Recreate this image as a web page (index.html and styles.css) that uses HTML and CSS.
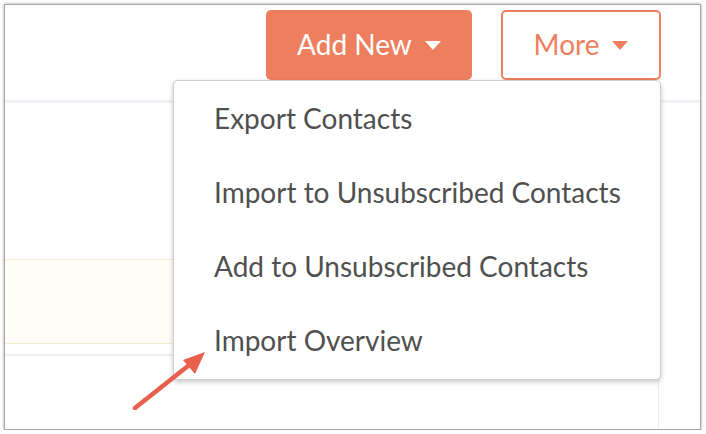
FILE: index.html
```html
<!DOCTYPE html>
<html>
<head>
<meta charset="utf-8">
<link rel="stylesheet" href="styles.css">
</head>
<body>
<div class="window">
  <div class="toolbar">
    <button class="btn btn-primary">Add New <span class="caret"></span></button>
    <button class="btn btn-outline">More <span class="caret"></span></button>
  </div>
  <div class="divider"></div>
  <div class="panel">
    <div class="notice"></div>
    <div class="row-line"></div>
  </div>
  <ul class="menu">
    <li>Export Contacts</li>
    <li>Import to Unsubscribed Contacts</li>
    <li>Add to Unsubscribed Contacts</li>
    <li>Import Overview</li>
  </ul>
  <svg class="pointer" width="90" height="80" viewBox="0 0 90 80">
    <line x1="6" y1="78" x2="64" y2="32" stroke="#e8604c" stroke-width="4.5" stroke-linecap="round"/>
    <polygon points="76,22 54,30 66,44" fill="#e8604c"/>
  </svg>
</div>
</body>
</html>
```

FILE: styles.css
```css
html, body {
  margin: 0;
  padding: 0;
  background: #ffffff;
}
body {
  font-family: Lato, "Open Sans", sans-serif;
}
.window {
  position: relative;
  margin: 4px 0 0 4px;
  width: 695px;
  height: 424px;
  border: 1px solid #a8a8a8;
  box-shadow: 0 0 3px rgba(0,0,0,0.35);
  background: #fff;
  overflow: hidden;
}
.toolbar {
  display: flex;
  justify-content: flex-end;
  align-items: flex-start;
  gap: 29px;
  height: 95px;
  box-sizing: border-box;
  padding: 5px 39px 0 0;
}
.btn {
  height: 70px;
  border-radius: 5px;
  font-family: Lato, "Open Sans", sans-serif;
  font-size: 28px;
  display: flex;
  align-items: center;
  justify-content: center;
  gap: 13px;
  padding: 0 0 2px;
  box-sizing: border-box;
  cursor: pointer;
}
.btn-primary {
  width: 206px;
  background: #ee7f5e;
  color: #fff;
  border: none;
}
.btn-outline {
  width: 160px;
  background: #fff;
  color: #ee7f5e;
  border: 2px solid #ee7f5e;
}
.caret {
  width: 0;
  height: 0;
  border-left: 8px solid transparent;
  border-right: 8px solid transparent;
  border-top: 9px solid currentColor;
  margin-top: 2px;
}
.divider {
  height: 3px;
  background: #eef2f6;
}
.panel {
  width: 654px;
  height: 326px;
  border-right: 1px solid #ececec;
  padding-top: 156px;
  box-sizing: border-box;
}
.notice {
  height: 85px;
  box-sizing: border-box;
  border-top: 1px solid #f4ebd2;
  border-bottom: 1px solid #f4ebd2;
  background: #fffdf6;
}
.row-line {
  margin-top: 10px;
  height: 2px;
  background: #efefef;
}
.menu {
  position: absolute;
  left: 168px;
  top: 75px;
  width: 488px;
  height: 300px;
  box-sizing: border-box;
  margin: 0;
  padding: 0;
  list-style: none;
  background: #fff;
  border: 1px solid #cfcfcf;
  border-radius: 5px;
  box-shadow: 0 2px 5px rgba(0,0,0,0.22);
}
.menu li {
  height: 74px;
  display: flex;
  align-items: center;
  padding-left: 40px;
  font-size: 28px;
  color: #505050;
}
.pointer {
  position: absolute;
  left: 124px;
  top: 325px;
}
```
